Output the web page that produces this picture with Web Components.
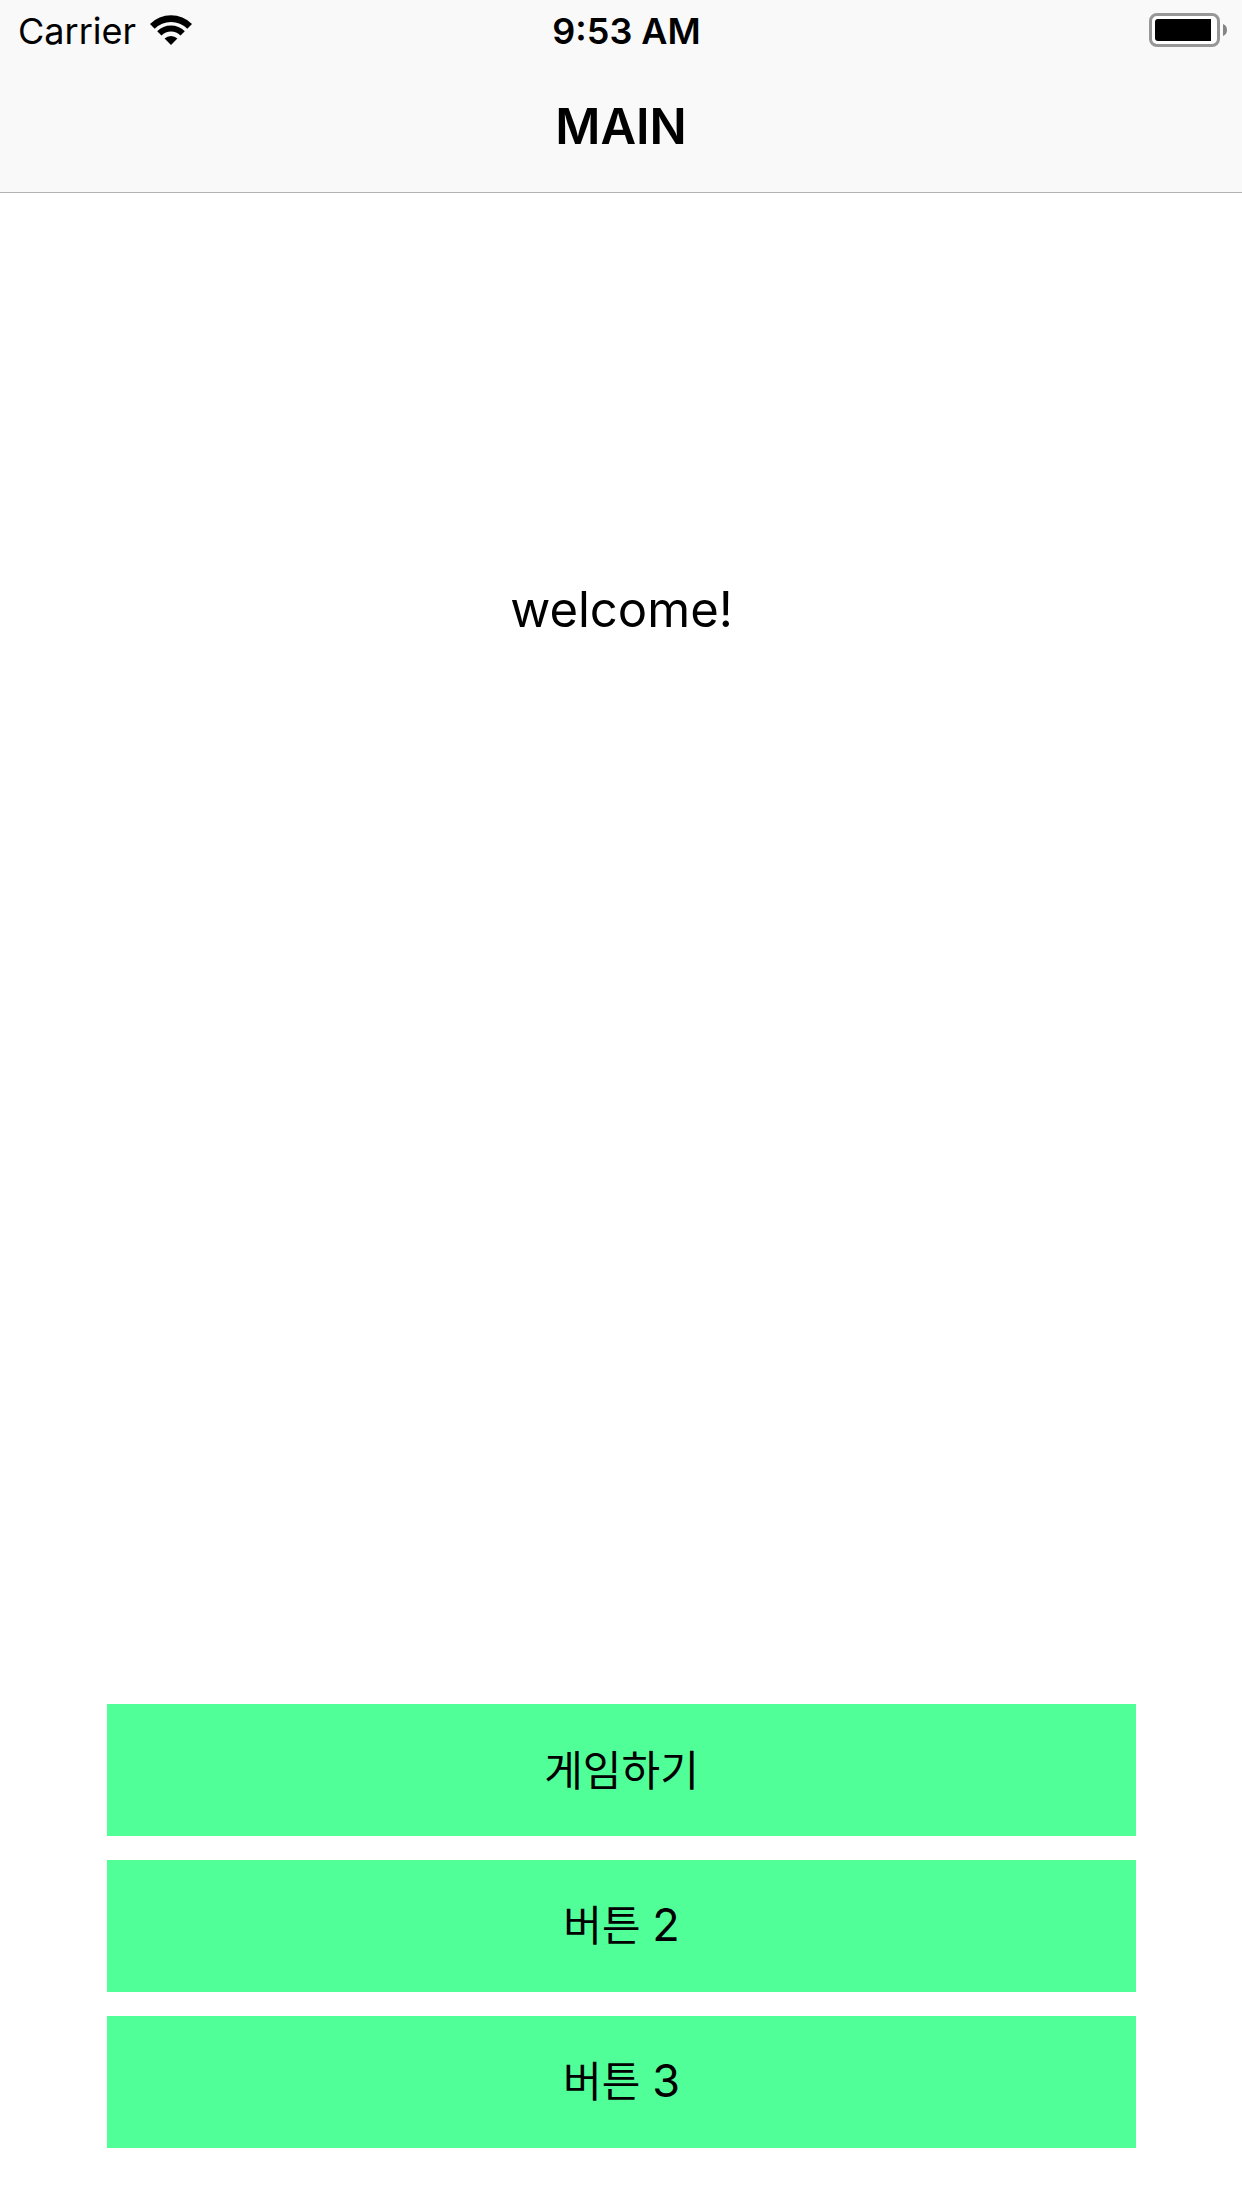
<!DOCTYPE html>
<html lang="ko">
<head>
<meta charset="utf-8">
<meta name="viewport" content="width=device-width, initial-scale=1">
<title>MAIN</title>
<style>
  html, body { margin: 0; height: 100%; }
  body { background: #fff; color: #000; font-family: Inter, "Noto Sans CJK KR", sans-serif; }
</style>
</head>
<body>
<main-screen></main-screen>

<template id="status-bar">
  <style>
    :host { display: grid; grid-template-columns: 1fr auto 1fr; align-items: center; height: 60px; padding: 0 15px 0 18px; font-size: 36px; line-height: 44px; }
    .left { display: flex; align-items: center; gap: 14px; }
    .left span, .time { padding-top: 2px; }
    .time { font-weight: 600; padding-left: 8px; }
    .battery { justify-self: end; }
    svg { display: block; }
  </style>
  <div class="left">
    <span><slot name="carrier"></slot></span>
    <svg width="42" height="30" viewBox="0 0 42 30" role="img" aria-label="Wi-Fi">
      <path d="M0 9A29.7 29.7 0 0 1 42 9L37.3 13.7A23 23 0 0 0 4.7 13.7Z"/>
      <path d="M7.2 16.2A19.5 19.5 0 0 1 34.8 16.2L30.5 20.5A13.5 13.5 0 0 0 11.5 20.5Z"/>
      <path d="M14.6 23.6A9 9 0 0 1 27.4 23.6L21 30Z"/>
    </svg>
  </div>
  <span class="time"><slot name="time"></slot></span>
  <svg class="battery" width="78" height="34" viewBox="0 0 78 34" role="img" aria-label="Battery">
    <rect x="1.5" y="1.5" width="68" height="31" rx="6.5" fill="#fff" stroke="#979797" stroke-width="3"/>
    <path d="M9 6H62V28H9Q6 28 6 25V9Q6 6 9 6Z"/>
    <path d="M74 11Q78 12.500 78 17Q78 21.500 74 23Z" fill="#858585"/>
  </svg>
</template>

<template id="nav-bar">
  <style>
    :host { display: flex; justify-content: center; align-items: center; box-sizing: border-box; height: 132px; padding-top: 2px; }
    h1 { margin: 0; font-size: 49px; line-height: 60px; font-weight: 600; }
  </style>
  <h1><slot></slot></h1>
</template>

<template id="menu-button">
  <style>
    :host { display: block; }
    button { display: block; width: 100%; height: 132px; margin: 0; padding: 0 0 4px; border: 0; border-radius: 0; background: #50ff98; color: inherit; font: 42px/60px "Noto Sans CJK KR", sans-serif; cursor: pointer; }
    ::slotted(span) { font: 45px/60px Inter, sans-serif; }
  </style>
  <button type="button"><slot></slot></button>
</template>

<template id="main-screen">
  <style>
    :host { display: flex; flex-direction: column; min-height: 100%; }
    header { background: #f9f9f9; border-bottom: 1px solid #b2b2b2; }
    main { flex: 1; display: flex; flex-direction: column; justify-content: space-between; padding: 387px 106px 60px 107px; }
    p { margin: 0; text-align: center; font-size: 49px; line-height: 60px; }
    nav { display: flex; flex-direction: column; gap: 24px; }
  </style>
  <header>
    <status-bar><span slot="carrier">Carrier</span><span slot="time">9:53 AM</span></status-bar>
    <nav-bar>MAIN</nav-bar>
  </header>
  <main>
    <p>welcome!</p>
    <nav>
      <menu-button>게임하기</menu-button>
      <menu-button>버튼 <span>2</span></menu-button>
      <menu-button>버튼 <span>3</span></menu-button>
    </nav>
  </main>
</template>

<script>
  for (const name of ["status-bar", "nav-bar", "menu-button", "main-screen"]) {
    customElements.define(name, class extends HTMLElement {
      constructor() {
        super();
        const template = document.getElementById(name);
        this.attachShadow({ mode: "open" }).append(template.content.cloneNode(true));
      }
    });
  }
</script>
</body>
</html>
